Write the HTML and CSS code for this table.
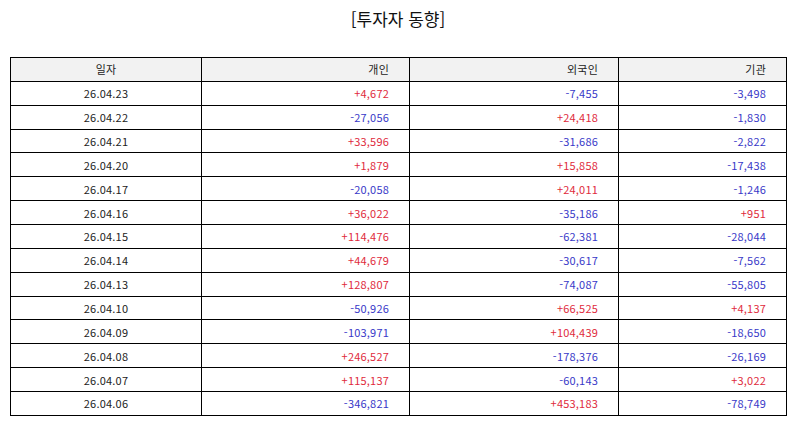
FILE: index.html
```html
<!DOCTYPE html>
<html lang="ko">
<head>
<meta charset="utf-8">
<link rel="stylesheet" href="styles.css">
</head>
<body>
<div class="page">
  <h1 class="title">[투자자 동향]</h1>
  <table class="grid">
    <colgroup>
      <col class="c1"><col class="c2"><col class="c3"><col class="c4">
    </colgroup>
    <thead>
      <tr><th class="ctr">일자</th><th>개인</th><th>외국인</th><th>기관</th></tr>
    </thead>
    <tbody>
      <tr><td class="ctr">26.04.23</td><td class="up">+4,672</td><td class="dn">-7,455</td><td class="dn">-3,498</td></tr>
      <tr><td class="ctr">26.04.22</td><td class="dn">-27,056</td><td class="up">+24,418</td><td class="dn">-1,830</td></tr>
      <tr><td class="ctr">26.04.21</td><td class="up">+33,596</td><td class="dn">-31,686</td><td class="dn">-2,822</td></tr>
      <tr><td class="ctr">26.04.20</td><td class="up">+1,879</td><td class="up">+15,858</td><td class="dn">-17,438</td></tr>
      <tr><td class="ctr">26.04.17</td><td class="dn">-20,058</td><td class="up">+24,011</td><td class="dn">-1,246</td></tr>
      <tr><td class="ctr">26.04.16</td><td class="up">+36,022</td><td class="dn">-35,186</td><td class="up">+951</td></tr>
      <tr><td class="ctr">26.04.15</td><td class="up">+114,476</td><td class="dn">-62,381</td><td class="dn">-28,044</td></tr>
      <tr><td class="ctr">26.04.14</td><td class="up">+44,679</td><td class="dn">-30,617</td><td class="dn">-7,562</td></tr>
      <tr><td class="ctr">26.04.13</td><td class="up">+128,807</td><td class="dn">-74,087</td><td class="dn">-55,805</td></tr>
      <tr><td class="ctr">26.04.10</td><td class="dn">-50,926</td><td class="up">+66,525</td><td class="up">+4,137</td></tr>
      <tr><td class="ctr">26.04.09</td><td class="dn">-103,971</td><td class="up">+104,439</td><td class="dn">-18,650</td></tr>
      <tr><td class="ctr">26.04.08</td><td class="up">+246,527</td><td class="dn">-178,376</td><td class="dn">-26,169</td></tr>
      <tr><td class="ctr">26.04.07</td><td class="up">+115,137</td><td class="dn">-60,143</td><td class="up">+3,022</td></tr>
      <tr><td class="ctr">26.04.06</td><td class="dn">-346,821</td><td class="up">+453,183</td><td class="dn">-78,749</td></tr>
    </tbody>
  </table>
</div>
</body>
</html>
```
FILE: styles.css
```css
html, body {
  margin: 0;
  padding: 0;
  background: #ffffff;
}
body {
  font-family: "Noto Sans CJK KR", "Noto Sans", "DejaVu Sans", sans-serif;
  color: #222222;
}
.page {
  padding: 0 8px 0 10px;
}
.title {
  margin: 0 0 27px 0;
  padding-top: 7px;
  font-size: 17px;
  font-weight: normal;
  line-height: 23px;
  text-align: center;
  color: #111111;
}
.grid {
  border-collapse: collapse;
  width: 776px;
  table-layout: fixed;
  font-size: 11px;
}
.c1 { width: 191px; }
.c2 { width: 208px; }
.c3 { width: 209px; }
.c4 { width: 168px; }
.grid th, .grid td {
  border: 1px solid #000000;
  height: 23.87px;
  padding: 0 20px 0 4px;
  text-align: right;
  line-height: 14px;
  box-sizing: border-box;
  letter-spacing: 0.2px;
}
.grid th {
  background: #f2f2f2;
  font-weight: normal;
  color: #222222;
}
.grid .ctr {
  text-align: center;
  padding: 0 4px;
}
.up { color: #e02a3c; }
.dn { color: #3838c8; }
```
